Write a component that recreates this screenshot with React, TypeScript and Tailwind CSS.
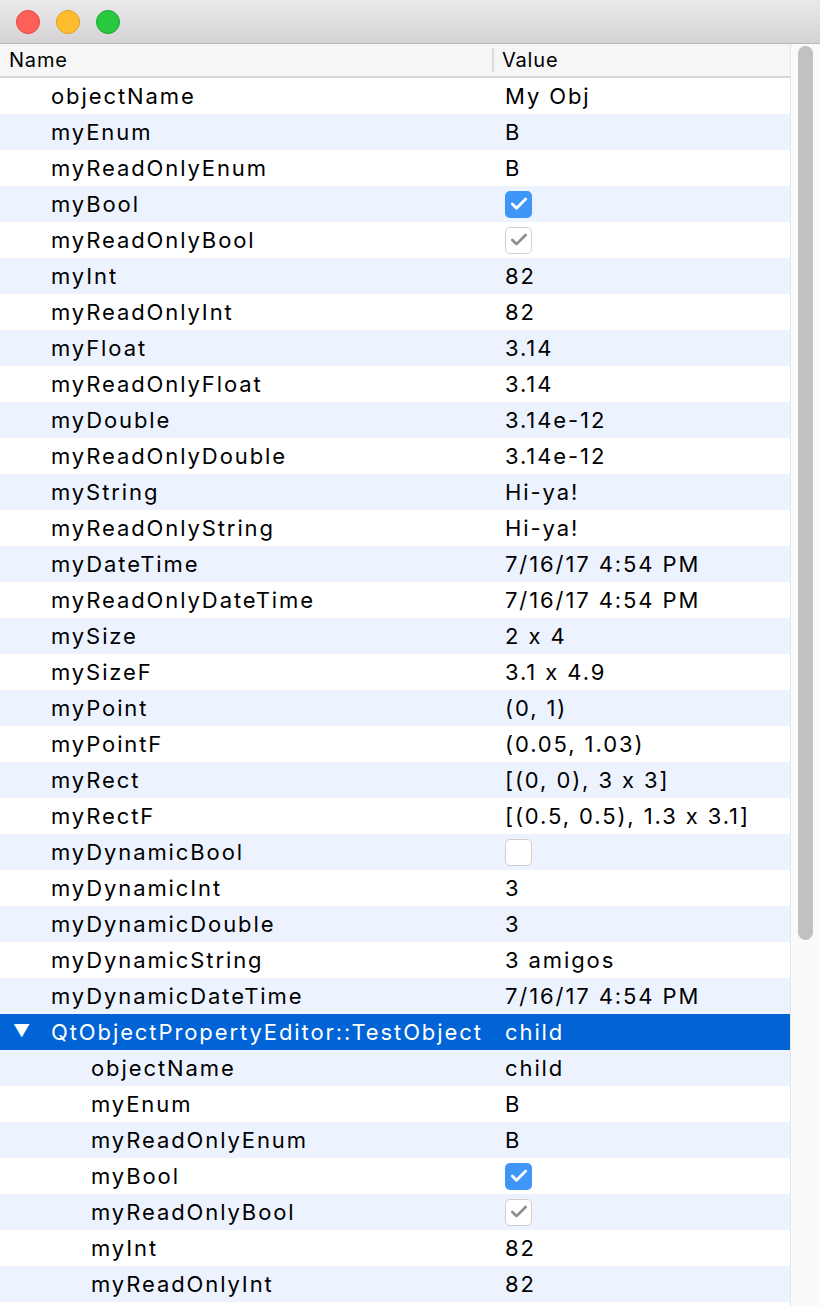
import { Check } from 'lucide-react';

type Row = {
    name: string;
    value?: string;
    check?: 'on' | 'off' | 'ro';
    level: number;
    selected?: boolean;
};

const top: [string, string | Row['check']][] = [
    ['objectName', 'My Obj'],
    ['myEnum', 'B'],
    ['myReadOnlyEnum', 'B'],
    ['myBool', 'on'],
    ['myReadOnlyBool', 'ro'],
    ['myInt', '82'],
    ['myReadOnlyInt', '82'],
    ['myFloat', '3.14'],
    ['myReadOnlyFloat', '3.14'],
    ['myDouble', '3.14e-12'],
    ['myReadOnlyDouble', '3.14e-12'],
    ['myString', 'Hi-ya!'],
    ['myReadOnlyString', 'Hi-ya!'],
    ['myDateTime', '7/16/17 4:54 PM'],
    ['myReadOnlyDateTime', '7/16/17 4:54 PM'],
    ['mySize', '2 x 4'],
    ['mySizeF', '3.1 x 4.9'],
    ['myPoint', '(0, 1)'],
    ['myPointF', '(0.05, 1.03)'],
    ['myRect', '[(0, 0), 3 x 3]'],
    ['myRectF', '[(0.5, 0.5), 1.3 x 3.1]'],
    ['myDynamicBool', 'off'],
    ['myDynamicInt', '3'],
    ['myDynamicDouble', '3'],
    ['myDynamicString', '3 amigos'],
    ['myDynamicDateTime', '7/16/17 4:54 PM'],
];

const child: [string, string | Row['check']][] = [
    ['objectName', 'child'],
    ['myEnum', 'B'],
    ['myReadOnlyEnum', 'B'],
    ['myBool', 'on'],
    ['myReadOnlyBool', 'ro'],
    ['myInt', '82'],
    ['myReadOnlyInt', '82'],
];

const toRow = ([name, v]: [string, string | Row['check']], level: number): Row =>
    v === 'on' || v === 'off' || v === 'ro' ? { name, check: v, level } : { name, value: v, level };

const rows: Row[] = [
    ...top.map((r) => toRow(r, 0)),
    { name: 'QtObjectPropertyEditor::TestObject', value: 'child', level: 0, selected: true },
    ...child.map((r) => toRow(r, 1)),
];

function CheckBox({ state }: { state: 'on' | 'off' | 'ro' }) {
    if (state === 'on') {
        return (
            <span className="flex h-[27px] w-[27px] items-center justify-center rounded-[5px] bg-[#3d96f8]">
                <Check className="h-[20px] w-[20px] text-white" strokeWidth={3.4} />
            </span>
        );
    }
    return (
        <span className="flex h-[27px] w-[27px] items-center justify-center rounded-[5px] border border-[#cfcfcf] bg-white">
            {state === 'ro' && <Check className="h-[20px] w-[20px] text-[#8e8e8e]" strokeWidth={3.2} />}
        </span>
    );
}

export default function App() {
    return (
        <div
            className="flex h-[1306px] w-[820px] flex-col overflow-hidden bg-white text-[22px] tracking-[1.9px] text-black"
            style={{ fontFamily: 'Inter, "Liberation Sans", sans-serif', fontFeatureSettings: '"calt" 0' }}
        >
            {/* Title bar */}
            <div className="flex h-[44px] shrink-0 items-center gap-[16px] border-b border-[#b8b6b8] bg-gradient-to-b from-[#ebe9eb] to-[#d4d2d4] pl-[16px]">
                <span className="h-[24px] w-[24px] rounded-full border border-[#e2463f] bg-[#fe5f57]" />
                <span className="h-[24px] w-[24px] rounded-full border border-[#e1a116] bg-[#febc2e]" />
                <span className="h-[24px] w-[24px] rounded-full border border-[#17a62f] bg-[#28c840]" />
            </div>

            <div className="flex min-h-0 flex-1">
                <div className="flex min-w-0 flex-1 flex-col">
                    {/* Header */}
                    <div className="flex h-[34px] shrink-0 items-center border-b-2 border-[#d6d6d6] bg-[#f6f6f6] text-[20px] tracking-[0.8px]">
                        <div className="w-[492px] pl-[9px]">Name</div>
                        <div className="h-[24px] w-[2px] bg-[#dcdcdc]" />
                        <div className="pl-[8px]">Value</div>
                    </div>

                    {rows.map((r, i) => (
                        <div
                            key={i}
                            className={`flex h-[36px] shrink-0 items-center ${
                                r.selected ? 'bg-[#0064d6] text-white' : i % 2 ? 'bg-[#edf3fe]' : 'bg-white'
                            }`}
                        >
                            <div className="flex w-[498px] items-center whitespace-nowrap">
                                {r.selected ? (
                                    <span className="w-[51px] pl-[13px] text-[17px]">▼</span>
                                ) : (
                                    <span className={r.level ? 'w-[91px]' : 'w-[51px]'} />
                                )}
                                {r.name}
                            </div>
                            <div className="flex items-center pl-[7px] whitespace-nowrap">
                                {r.check ? <CheckBox state={r.check} /> : r.value}
                            </div>
                        </div>
                    ))}
                </div>

                {/* Scrollbar */}
                <div className="w-[30px] shrink-0 border-l border-[#e6e6e6] bg-[#fafafa] px-[7px] pt-[2px]">
                    <div className="h-[894px] w-[15px] rounded-full bg-[#c1c1c1]" />
                </div>
            </div>
        </div>
    );
}
